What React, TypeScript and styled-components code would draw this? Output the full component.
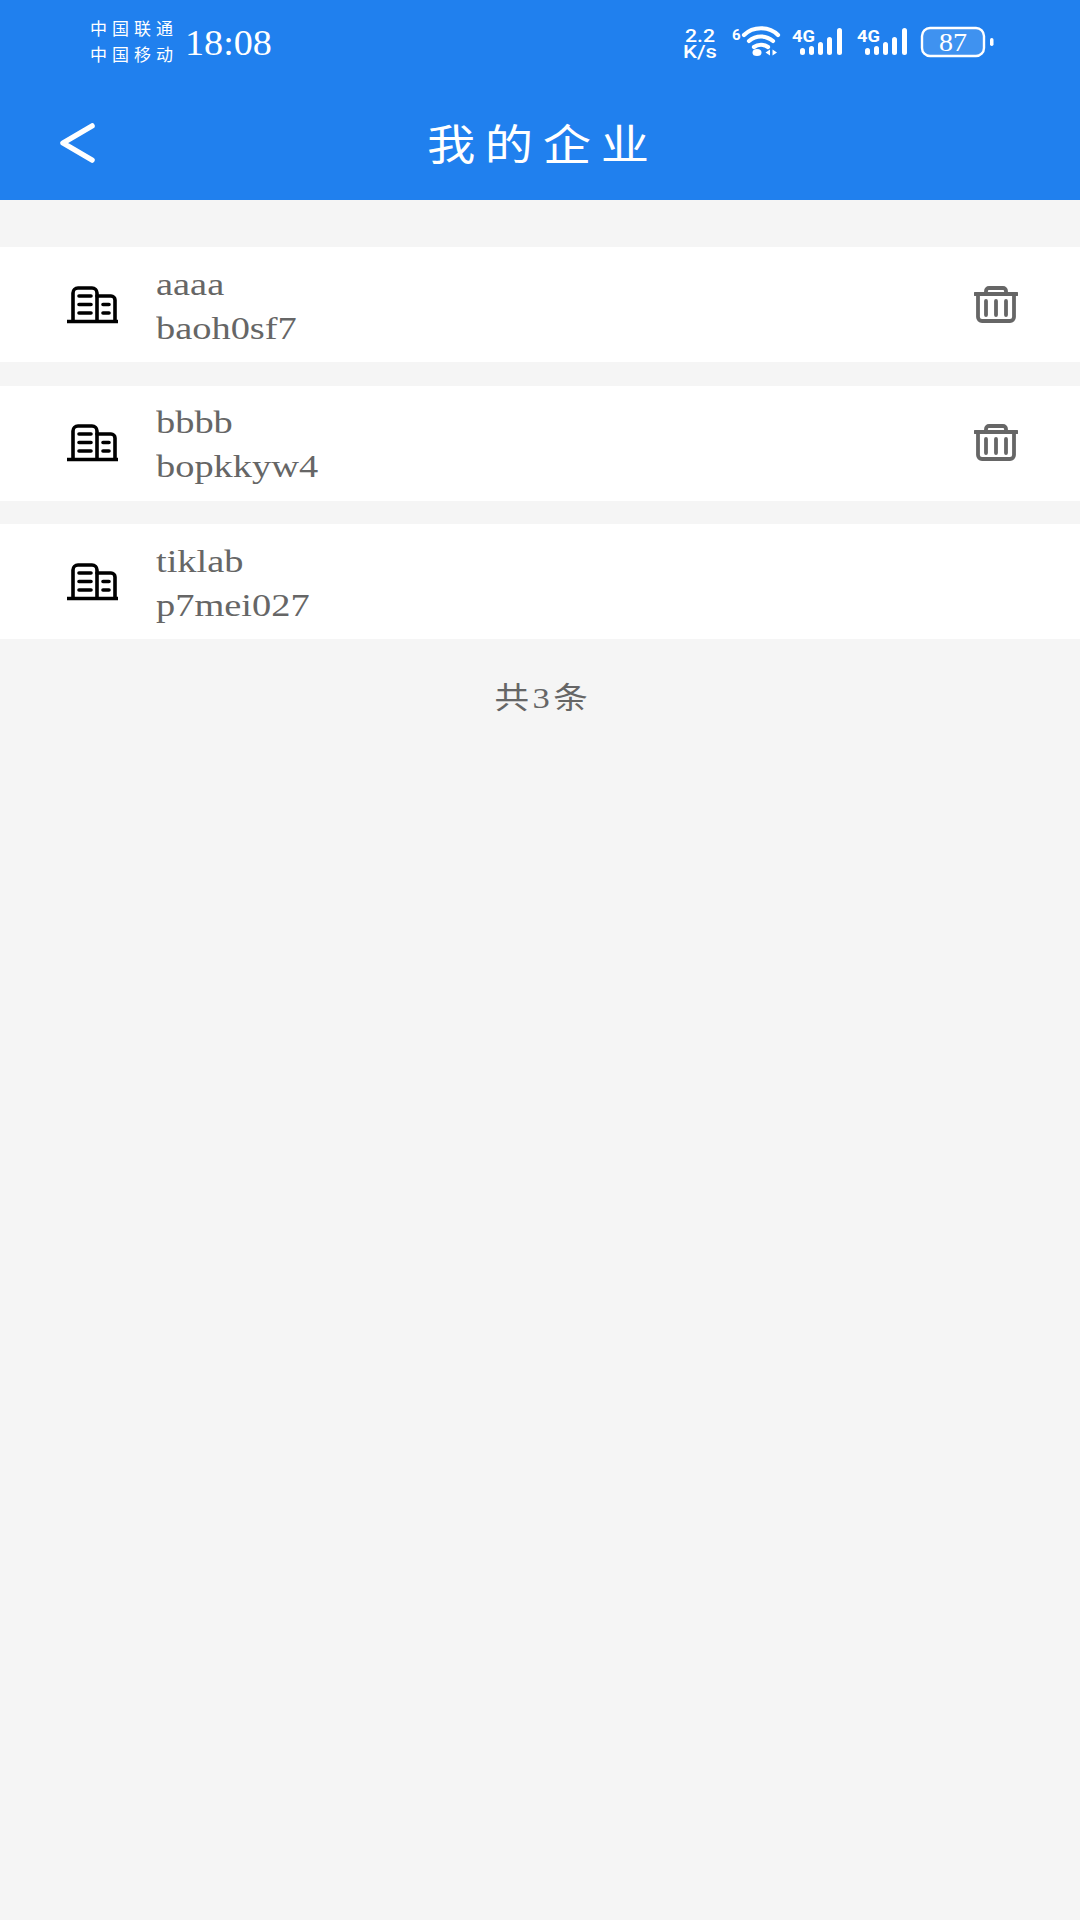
import React from "react";
import styled, { createGlobalStyle } from "styled-components";

const Global = createGlobalStyle`
  html, body { margin: 0; padding: 0; background: #f5f5f5; overflow: hidden; }
  #root { width: 1080px; height: 1920px; }
  * { box-sizing: border-box; }
`;

const serif = `"Liberation Serif", "Noto Sans CJK SC", serif`;

const Page = styled.div`
  width: 1080px;
  height: 1920px;
  background: #f5f5f5;
  display: flex;
  flex-direction: column;
  font-family: ${serif};
  overflow: hidden;
`;

const Header = styled.header`
  height: 200px;
  background: #2080ee;
  color: #fff;
  display: flex;
  flex-direction: column;
`;

const StatusBar = styled.div`
  height: 86px;
  padding: 0 85px 0 90px;
  display: flex;
  align-items: center;
  justify-content: space-between;
`;

const StatusLeft = styled.div`
  display: flex;
  align-items: center;
  gap: 6px;
`;

const Carriers = styled.div`
  display: flex;
  flex-direction: column;
  font-family: "Noto Sans CJK SC", sans-serif;
  font-weight: 400;
  font-size: 17px;
  line-height: 26px;
  letter-spacing: 5px;
  white-space: nowrap;
  width: 89px;
  margin-top: -5px;
`;

const Clock = styled.span`
  font-size: 36px;
  line-height: 40px;
  display: inline-block;
  transform: scaleX(1.06);
  transform-origin: left center;
`;

const StatusIcons = styled.svg`
  display: block;
  flex: none;
`;

const NavBar = styled.div`
  flex: 1;
  position: relative;
  display: flex;
  align-items: center;
  justify-content: center;
`;

const BackIcon = styled.svg`
  position: absolute;
  left: 59px;
  top: 36px;
`;

const Title = styled.h1`
  margin: 0;
  font-family: "Noto Sans CJK SC", sans-serif;
  font-weight: 400;
  font-size: 42px;
  line-height: 60px;
  letter-spacing: 8.400px;
  margin-right: -6px;
  margin-top: -2px;
  transform: scaleX(1.15);
`;

const List = styled.main`
  margin-top: 47px;
  display: flex;
  flex-direction: column;
  gap: 23.5px;
`;

const Row = styled.div`
  height: 115px;
  background: #fff;
  display: flex;
  align-items: center;
  padding: 0 62px 0 67px;
`;

const Info = styled.div`
  flex: 1;
  margin-left: 38px;
  padding-top: 2px;
  display: flex;
  flex-direction: column;
  color: #666;
  font-size: 32px;
  line-height: 44px;
`;

const Line = styled.span`
  display: block;
  transform: scaleX(1.2);
  transform-origin: left center;
`;

const Footer = styled.div`
  margin-top: 38px;
  padding-left: 5px;
  text-align: center;
  color: #666;
  font-size: 30px;
  line-height: 42px;
  letter-spacing: 3px;
  transform: scaleX(1.15);
`;

const BuildingIcon = () => (
  <svg width="51" height="38" viewBox="0 0 51 38" fill="none" stroke="#000" strokeWidth="3.600" strokeLinecap="round" style={{ flex: "none" }}>
    <path d="M0 35.500H51" />
    <path d="M6 35V7a5 5 0 0 1 5-5h14a5 5 0 0 1 5 5v28" />
    <path d="M30 10h14a4 4 0 0 1 4 4v21" />
    <path d="M12 10h12M12 18.500h12M12 27h12M36 18.500h6M36 27h6" />
  </svg>
);

const TrashIcon = () => (
  <svg width="44" height="38" viewBox="0 0 44 38" fill="none" stroke="#666" strokeWidth="3.800" strokeLinecap="round" strokeLinejoin="round" style={{ flex: "none" }}>
    <path d="M1 8H43" />
    <path d="M4 8V31a4 4 0 0 0 4 4H36a4 4 0 0 0 4-4V8" />
    <path d="M12 8V5a3 3 0 0 1 3-3H29a3 3 0 0 1 3 3V8" />
    <path d="M12 15V29M22 15V29M32 15V29" />
  </svg>
);

const Signal = ({ x }: { x: number }) => (
  <g transform={`translate(${x} 0)`}>
    <text x="0" y="16" fontFamily="Roboto, sans-serif" fontWeight="700" fontSize="17" fill="#fff" textLength="23" lengthAdjust="spacingAndGlyphs">4G</text>
    <rect x="8" y="22" width="5" height="7" rx="2.500" fill="#fff" />
    <rect x="17" y="20" width="5" height="9" rx="2.500" fill="#fff" />
    <rect x="26" y="16" width="5" height="13" rx="2.500" fill="#fff" />
    <rect x="35" y="11" width="5" height="18" rx="2.500" fill="#fff" />
    <rect x="45" y="2" width="5" height="27" rx="2.500" fill="#fff" />
  </g>
);

const StatusRight = () => (
  <StatusIcons width="315" height="50" viewBox="0 -8 315 50">
    <text x="5" y="16" fontFamily="Roboto, sans-serif" fontWeight="500" fontSize="19" fill="#fff" textLength="30" lengthAdjust="spacingAndGlyphs">2.2</text>
    <text x="3" y="32" fontFamily="Roboto, sans-serif" fontWeight="500" fontSize="18" fill="#fff" textLength="34" lengthAdjust="spacingAndGlyphs">K/s</text>
    <text x="52" y="14" fontFamily="Roboto, sans-serif" fontWeight="700" fontSize="15" fill="#fff">6</text>
    <g fill="none" stroke="#fff" strokeWidth="4.200" strokeLinecap="round">
      <path d="M64 9C73 0 89 0 98 9" />
      <path d="M69 15C76 9 86 9 93 15" />
      <path d="M74 21C78 18 84 18 88 21" />
    </g>
    <ellipse cx="77" cy="26.500" rx="4.500" ry="3.500" fill="#fff" />
    <path d="M90 23.500V29.500L85.500 26.500ZM92.500 23.500V29.500L97 26.500Z" fill="#fff" />
    <Signal x={112} />
    <Signal x={177} />
    <rect x="242" y="2" width="62" height="28" rx="8" fill="#fff" fillOpacity="0.14" stroke="#fff" strokeWidth="2.400" />
    <text x="259" y="25" fontFamily="Liberation Serif, serif" fontSize="25" fill="#fff" textLength="28" lengthAdjust="spacingAndGlyphs">87</text>
    <rect x="310" y="12" width="3.500" height="8" rx="1.700" fill="#fff" />
  </StatusIcons>
);

const companies = [
  { name: "aaaa", code: "baoh0sf7", removable: true },
  { name: "bbbb", code: "bopkkyw4", removable: true },
  { name: "tiklab", code: "p7mei027", removable: false },
];

export default function App() {
  return (
    <Page>
      <Global />
      <Header>
        <StatusBar>
          <StatusLeft>
            <Carriers>
              <span>中国联通</span>
              <span>中国移动</span>
            </Carriers>
            <Clock>18:08</Clock>
          </StatusLeft>
          <StatusRight />
        </StatusBar>
        <NavBar>
          <BackIcon width="36" height="42" viewBox="0 0 36 42" fill="none" stroke="#fff" strokeWidth="5.500" strokeLinecap="round" strokeLinejoin="round">
            <path d="M33 4L4 21L33 38" />
          </BackIcon>
          <Title>我的企业</Title>
        </NavBar>
      </Header>
      <List>
        {companies.map((c) => (
          <Row key={c.code}>
            <BuildingIcon />
            <Info>
              <Line>{c.name}</Line>
              <Line>{c.code}</Line>
            </Info>
            {c.removable && <TrashIcon />}
          </Row>
        ))}
      </List>
      <Footer>共3条</Footer>
    </Page>
  );
}
